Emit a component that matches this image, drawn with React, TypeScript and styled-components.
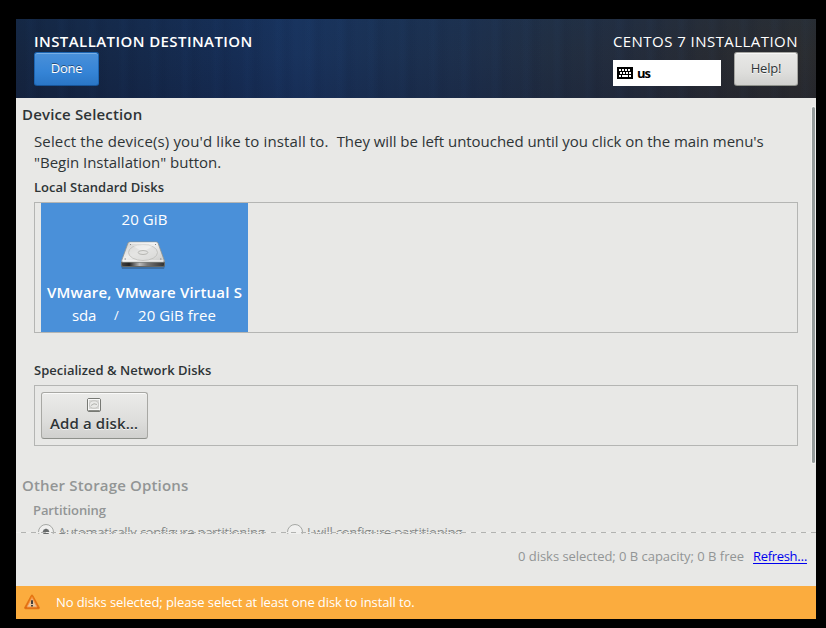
import React from "react";
import styled, { createGlobalStyle } from "styled-components";

const GlobalStyle = createGlobalStyle`
  * { box-sizing: border-box; }
  body {
    margin: 0;
    background: #000;
    color: #2e3436;
    font-family: "Open Sans", "Noto Sans", sans-serif;
    font-size: 15px;
    line-height: 20px;
  }
`;

const Screen = styled.div`
  width: 826px;
  height: 628px;
  padding: 19px 10px 9px 16px;
  background: #000;
  overflow: hidden;
`;

const Window = styled.main`
  display: flex;
  flex-direction: column;
  width: 800px;
  height: 600px;
  background: #e8e8e6;
`;

const Label = styled.span<{ $track?: number; $bold?: boolean; $small?: boolean }>`
  display: block;
  white-space: pre;
  font-size: ${(p) => (p.$small ? 13 : 15)}px;
  line-height: ${(p) => (p.$small ? 18 : 20)}px;
  font-weight: ${(p) => (p.$bold ? 600 : 400)};
  letter-spacing: ${(p) => p.$track ?? 0}px;
`;

const Header = styled.header`
  display: flex;
  justify-content: space-between;
  height: 79px;
  padding: 12px 18px 0;
  color: #fff;
  background:
    linear-gradient(180deg, rgba(20, 60, 110, 0.12), rgba(20, 50, 100, 0.04) 45%, rgba(12, 16, 50, 0.14)),
    repeating-linear-gradient(90deg, rgba(40, 90, 160, 0) 0 9px, rgba(40, 90, 160, 0.04) 13px 15px, rgba(5, 10, 30, 0.05) 22px 24px, rgba(40, 90, 160, 0) 31px),
    linear-gradient(90deg, #15253f 0, #15294a 130px, #162d54 220px, #19335d 280px, #1b3050 380px, #1e2f4a 460px, #222e40 540px, #242c3b 610px, #292b30 700px, #2c2c2c 800px);
`;

const HeaderColumn = styled.div`
  display: flex;
  flex-direction: column;
  align-items: flex-start;
  gap: 1px;
`;

const HeaderControls = styled.div`
  display: flex;
  justify-content: space-between;
  align-items: flex-end;
  width: 185px;
  height: 34px;
`;

const Button = styled.button<{ $primary?: boolean }>`
  display: flex;
  justify-content: center;
  width: ${(p) => (p.$primary ? 65 : 64)}px;
  height: 34px;
  padding: 0 0 2px;
  align-items: center;
  font-family: inherit;
  border-radius: 3px;
  color: ${(p) => (p.$primary ? "#fff" : "#2e3436")};
  border: 1px solid ${(p) => (p.$primary ? "#1c65b2" : "#a5a5a1")};
  border-bottom-color: ${(p) => (p.$primary ? "#17559a" : "#8e918b")};
  background: ${(p) =>
    p.$primary
      ? "linear-gradient(#4a90d9, #3584d6 60%, #2a76c6)"
      : "linear-gradient(#e9e9e7, #dededc 60%, #d0d0ce)"};
  box-shadow: inset 0 1px ${(p) => (p.$primary ? "#78aee5" : "#f7f7f6")};
  text-shadow: ${(p) => (p.$primary ? "0 -1px rgba(0,0,0,.45)" : "0 1px rgba(255,255,255,.8)")};
`;

const KeyboardLayout = styled.div`
  display: flex;
  align-items: center;
  gap: 4px;
  width: 108px;
  height: 26px;
  padding-left: 4px;
  background: #fff;
  color: #000;
`;

const LayoutName = styled(Label)`
  font-weight: 700;
`;

const Scroller = styled.section`
  position: relative;
  height: 436px;
  padding: 6px 18px 0;
  overflow: hidden;
`;

const SectionTitle = styled.h2<{ $disabled?: boolean }>`
  margin: 0 0 0 -12px;
  color: ${(p) => (p.$disabled ? "#929595" : "inherit")};
`;

const Paragraph = styled.div`
  margin: 7px 0 5px;
  ${Label} { line-height: 21px; }
`;

const Line = styled.div`
  display: flex;
`;

const DiskList = styled.div<{ $height: number }>`
  display: flex;
  align-items: flex-start;
  width: 764px;
  height: ${(p) => p.$height}px;
  margin: 6px 0 28px;
  padding: ${(p) => (p.$height < 100 ? 6 : 0)}px 6px 0;
  border: 1px solid #b4b5b3;
`;

const DiskCard = styled.article`
  display: flex;
  flex-direction: column;
  align-items: center;
  width: 207px;
  height: 129px;
  padding-top: 6px;
  background: #4a90d9;
  color: #fff;
`;

const DriveArt = styled.svg`
  width: 48px;
  height: 34px;
  margin: 8px 3px 11px 0;
  flex: none;
`;

const DiskDetails = styled.div`
  display: flex;
  width: 100%;
  margin-top: 3px;
  padding-left: 31px;
`;

const Slash = styled.span`
  width: 42px;
  padding-left: 18px;
  font-size: 13px;
  line-height: 20px;
`;

const AddButton = styled.button`
  display: flex;
  flex-direction: column;
  align-items: center;
  width: 107px;
  height: 47px;
  padding: 4px 1px 0 0;
  font-family: inherit;
  color: #2e3436;
  border: 1px solid #a8a8a4;
  border-bottom-color: #8e908b;
  border-radius: 3px;
  background: linear-gradient(#ebebe9, #dededc 60%, #d0d0ce);
  box-shadow: inset 0 1px #fafaf9;
  text-shadow: 0 1px rgba(255, 255, 255, 0.8);
`;

const StorageOptions = styled.div`
  margin-top: 29px;
  color: #929595;
`;

const Subheading = styled.div`
  margin: 6px 0 4px -1px;
`;

const RadioRow = styled.div`
  display: flex;
  padding-left: 4px;
`;

const RadioOption = styled.label<{ $width: number }>`
  display: flex;
  gap: 4px;
  width: ${(p) => p.$width}px;
  color: #858888;
`;

const Radio = styled.span<{ $checked?: boolean }>`
  flex: none;
  width: 16px;
  height: 16px;
  margin-top: 1px;
  border: 1px solid #a6a8a5;
  border-radius: 50%;
  background: ${(p) =>
    p.$checked
      ? "radial-gradient(circle, #686b6b 0 2.6px, #f0f0ef 3.8px)"
      : "#f0f0ef"};
`;

const ScrollThumb = styled.div`
  position: absolute;
  top: 9px;
  right: 1px;
  width: 3px;
  height: 356px;
  border-radius: 2px;
  background: #949b9b;
  box-shadow: 0 0 0 1px #f2f2f1;
`;

const Undershoot = styled.div`
  position: absolute;
  left: 0;
  right: 0;
  bottom: 1px;
  height: 1px;
  background: repeating-linear-gradient(90deg, #eeeeec 0 5px, #b2b3b1 5px 10px);
`;

const Summary = styled.div`
  display: flex;
  justify-content: flex-end;
  gap: 9px;
  height: 52px;
  padding: 13px 9px 0;
  color: #929595;
`;

const RefreshLink = styled.a`
  height: 17px;
  color: #0000ee;
  border-bottom: 1px solid #0000ee;
`;

const WarningBar = styled.footer`
  display: flex;
  align-items: flex-start;
  gap: 16px;
  height: 33px;
  padding: 7px 8px 0;
  color: #fff;
  background: #fbac3e;
`;

const WarningArt = styled.svg`
  width: 16px;
  height: 16px;
  margin-top: 1px;
`;

const KeyboardIcon = () => (
  <svg width="16" height="12" viewBox="0 0 16 12" shapeRendering="crispEdges">
    <rect width="16" height="12" rx="1" />
    <path
      fill="#fff"
      d="M2 2h2v2H2zM5 2h2v2H5zM8 2h2v2H8zM11 2h2v2h-2zM3 5h2v2H3zM6 5h2v2H6zM9 5h2v2H9zM12 5h2v2h-2zM2 8h2v2H2zM5 8h6v2H5zM12 8h2v2h-2z"
    />
  </svg>
);

const HardDrive = () => (
  <DriveArt viewBox="0 0 48 34">
    <defs>
      <linearGradient id="driveTop" x1="0" y1="0" x2="1" y2="1">
        <stop offset="0" stopColor="#cacac8" />
        <stop offset=".45" stopColor="#efefee" />
        <stop offset="1" stopColor="#c9c9c7" />
      </linearGradient>
      <linearGradient id="driveFront">
        <stop offset="0" stopColor="#444" />
        <stop offset=".18" stopColor="#222" />
        <stop offset=".42" stopColor="#bbb" />
        <stop offset=".6" stopColor="#777" />
        <stop offset="1" stopColor="#303030" />
      </linearGradient>
    </defs>
    <path d="M2 29h44l-1 3H3z" fill="#234" opacity=".35" />
    <path d="M2.500 25h43v3q0 1.500-1.500 1.500H4q-1.500 0-1.500-1.500z" fill="url(#driveFront)" stroke="#666864" />
    <path d="M10.500 5h27q1 0 1.500 1l6.500 18q0 1-1 1h-41q-1 0-1-1L9 6q.5-1 1.500-1z" fill="url(#driveTop)" stroke="#91938e" strokeWidth=".8" />
    <path d="M10.700 6h26.600M4 24h40" stroke="#fff" fill="none" />
    <ellipse cx="24" cy="15.500" rx="14.500" ry="8" fill="#dededc" fillOpacity=".6" stroke="#bcbdb9" strokeWidth=".8" />
    <path d="M24 15L14 9q9-4 20 0z" fill="#fff" opacity=".4" />
    <ellipse cx="24" cy="15.500" rx="4.800" ry="2" fill="#e2e2e0" stroke="#a9aaa6" strokeWidth=".8" />
    <path d="M11 7.500h1M36 7.500h1M5.500 22h1.500M41 22h1.500" stroke="#888" />
  </DriveArt>
);

const SmallDrive = () => (
  <svg width="16" height="16" viewBox="0 0 16 16">
    <rect x="1.500" y="1.500" width="13" height="13" rx="1.500" fill="#dcdcda" stroke="#777974" />
    <rect x="2.500" y="2.500" width="11" height="10" fill="#d8d8d6" stroke="#f8f8f7" />
    <ellipse cx="8" cy="7.500" rx="4.500" ry="3.700" fill="#e9e9e7" stroke="#bcbdb9" strokeWidth=".8" />
    <path d="M5 8.500q3-3 6-1" fill="none" stroke="#b0b1ad" />
    <path d="M2.500 13.500h11" stroke="#8a8c87" />
  </svg>
);

const WarningIcon = () => (
  <WarningArt viewBox="0 0 16 16">
    <defs>
      <linearGradient id="warnFill" x1="0" y1="0" x2="0" y2="1">
        <stop offset="0" stopColor="#ee7d14" />
        <stop offset="1" stopColor="#df6a12" />
      </linearGradient>
      <linearGradient id="warnCore" x1="0" y1="0" x2="0" y2="1">
        <stop offset="0" stopColor="#f7b878" />
        <stop offset="1" stopColor="#e8c9a4" />
      </linearGradient>
    </defs>
    <path d="M7.200 1.400q.8-1.200 1.600 0l6.500 12q.5 1.400-1 1.400H1.700q-1.500 0-1-1.400z" fill="url(#warnFill)" stroke="#d9650a" strokeWidth=".6" />
    <path d="M8 3.400l5 9.600H3z" fill="url(#warnCore)" stroke="#f59a48" strokeWidth=".9" />
    <path d="M7.100 6.300h1.800v3.700H7.100zM7.100 11h1.800v1.500H7.100z" fill="#333" />
  </WarningArt>
);

export default function App() {
  return (
    <Screen>
      <GlobalStyle />
      <Window>
        <Header>
          <HeaderColumn>
            <Label $bold $track={0.42}>INSTALLATION DESTINATION</Label>
            <Button $primary>
              <Label $small $track={-0.3}>Done</Label>
            </Button>
          </HeaderColumn>
          <HeaderColumn>
            <Label $track={0.45}>CENTOS 7 INSTALLATION</Label>
            <HeaderControls>
              <KeyboardLayout>
                <KeyboardIcon />
                <LayoutName $small $track={-0.9}>us</LayoutName>
              </KeyboardLayout>
              <Button>
                <Label $small $track={-0.2}>Help!</Label>
              </Button>
            </HeaderControls>
          </HeaderColumn>
        </Header>

        <Scroller>
          <SectionTitle>
            <Label $bold $track={0.16}>Device Selection</Label>
          </SectionTitle>
          <Paragraph>
            <Line>
              <Label $track={0.137}>{"Select the device(s) you'd like to install to.  "}</Label>
              <Label $track={-0.045}>
                {"They will be left untouched until you click on the main menu's"}
              </Label>
            </Line>
            <Label $track={-0.02}>{'"Begin Installation" button.'}</Label>
          </Paragraph>

          <Label $small $bold>Local Standard Disks</Label>
          <DiskList $height={131}>
            <DiskCard>
              <Label $track={0.1}>20 GiB</Label>
              <HardDrive />
              <Label $bold $track={0.18}>VMware, VMware Virtual S</Label>
              <DiskDetails>
                <Label $track={-0.2}>sda</Label>
                <Slash>/</Slash>
                <Label $track={0.05}>20 GiB free</Label>
              </DiskDetails>
            </DiskCard>
          </DiskList>

          <Label $small $bold $track={0.02}>{"Specialized & Network Disks"}</Label>
          <DiskList $height={61}>
            <AddButton>
              <SmallDrive />
              <Label $bold $track={0.13}>Add a disk…</Label>
            </AddButton>
          </DiskList>

          <StorageOptions>
            <SectionTitle $disabled>
              <Label $bold $track={0.17}>Other Storage Options</Label>
            </SectionTitle>
            <Subheading>
              <Label $small $bold $track={-0.09}>Partitioning</Label>
            </Subheading>
            <RadioRow>
              <RadioOption $width={249}>
                <Radio $checked />
                <Label $small $track={-0.29}>Automatically configure partitioning</Label>
              </RadioOption>
              <RadioOption $width={200}>
                <Radio />
                <Label $small $track={-0.22}>I will configure partitioning</Label>
              </RadioOption>
            </RadioRow>
          </StorageOptions>
          <ScrollThumb />
          <Undershoot />
        </Scroller>

        <Summary>
          <Label $small $track={-0.03}>0 disks selected; 0 B capacity; 0 B free</Label>
          <RefreshLink>
            <Label $small $track={-0.32}>Refresh…</Label>
          </RefreshLink>
        </Summary>
        <WarningBar>
          <WarningIcon />
          <Label $small $track={-0.1}>No disks selected; please select at least one disk to install to.</Label>
        </WarningBar>
      </Window>
    </Screen>
  );
}
